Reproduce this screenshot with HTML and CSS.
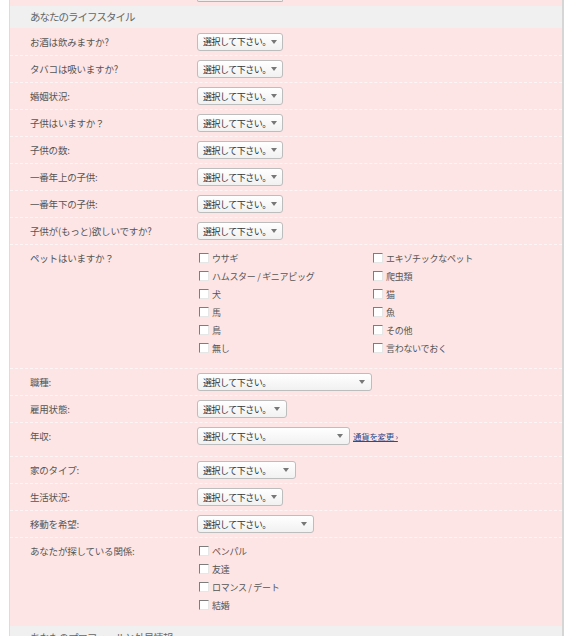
FILE: index.html
```html
<!DOCTYPE html>
<html lang="ja">
<head>
<meta charset="utf-8">
<title>あなたのライフスタイル</title>
<link rel="stylesheet" href="styles.css">
</head>
<body>
<div class="panel">
  <div class="prev"><div class="prev-select"></div></div>
  <div class="section-head">あなたのライフスタイル</div>

  <div class="row"><div class="label">お酒は飲みますか?</div><div class="select w86"><span>選択して下さい。</span><i></i></div></div>
  <div class="row"><div class="label">タバコは吸いますか?</div><div class="select w86"><span>選択して下さい。</span><i></i></div></div>
  <div class="row"><div class="label">婚姻状況:</div><div class="select w86"><span>選択して下さい。</span><i></i></div></div>
  <div class="row"><div class="label">子供はいますか？</div><div class="select w86"><span>選択して下さい。</span><i></i></div></div>
  <div class="row"><div class="label">子供の数:</div><div class="select w86"><span>選択して下さい。</span><i></i></div></div>
  <div class="row"><div class="label">一番年上の子供:</div><div class="select w86"><span>選択して下さい。</span><i></i></div></div>
  <div class="row"><div class="label">一番年下の子供:</div><div class="select w86"><span>選択して下さい。</span><i></i></div></div>
  <div class="row"><div class="label">子供が(もっと)欲しいですか?</div><div class="select w86"><span>選択して下さい。</span><i></i></div></div>

  <div class="row tall pets">
    <div class="label">ペットはいますか？</div>
    <div class="checks two">
      <label class="cb"><b></b>ウサギ</label>
      <label class="cb"><b></b>エキゾチックなペット</label>
      <label class="cb"><b></b>ハムスター / ギニアピッグ</label>
      <label class="cb"><b></b>爬虫類</label>
      <label class="cb"><b></b>犬</label>
      <label class="cb"><b></b>猫</label>
      <label class="cb"><b></b>馬</label>
      <label class="cb"><b></b>魚</label>
      <label class="cb"><b></b>鳥</label>
      <label class="cb"><b></b>その他</label>
      <label class="cb"><b></b>無し</label>
      <label class="cb"><b></b>言わないでおく</label>
    </div>
  </div>

  <div class="row"><div class="label">職種:</div><div class="select w175"><span>選択して下さい。</span><i></i></div></div>
  <div class="row"><div class="label">雇用状態:</div><div class="select w90"><span>選択して下さい。</span><i></i></div></div>
  <div class="row income"><div class="label">年収:</div><div class="field"><div class="select w153"><span>選択して下さい。</span><i></i></div><a class="link" href="#">通貨を変更 ›</a></div></div>
  <div class="row"><div class="label">家のタイプ:</div><div class="select w99"><span>選択して下さい。</span><i></i></div></div>
  <div class="row"><div class="label">生活状況:</div><div class="select w86"><span>選択して下さい。</span><i></i></div></div>
  <div class="row"><div class="label">移動を希望:</div><div class="select w117"><span>選択して下さい。</span><i></i></div></div>

  <div class="row tall rel">
    <div class="label">あなたが探している関係:</div>
    <div class="checks">
      <label class="cb"><b></b>ペンパル</label>
      <label class="cb"><b></b>友達</label>
      <label class="cb"><b></b>ロマンス / デート</label>
      <label class="cb"><b></b>結婚</label>
    </div>
  </div>

  <div class="section-head last">あなたのプロフィールと外見情報</div>
</div>
</body>
</html>
```

FILE: styles.css
```css
html, body {
  margin: 0;
  padding: 0;
  background: #ffffff;
  overflow: hidden;
}
body {
  font-family: "Noto Sans CJK JP", "Liberation Sans", sans-serif;
  color: #555;
}
.panel {
  margin-left: 9px;
  width: 552px;
  border-left: 1px solid #dcdcdc;
  border-right: 2px solid #d6d6d6;
  background: #fde5e5;
}
.prev {
  height: 6px;
  padding-left: 187px;
}
.prev-select {
  width: 84px;
  height: 1px;
  border: 1px solid #b9b3b3;
  border-top: none;
  border-radius: 0 0 3px 3px;
  background: #f2eeee;
}
.section-head {
  height: 22px;
  line-height: 21px;
  background: #f0f0f0;
  padding-left: 20px;
  font-size: 10.5px;
  letter-spacing: -1px;
  color: #666;
}
.section-head.last {
  height: 16px;
  line-height: 24px;
  overflow: hidden;
}
.row {
  display: grid;
  grid-template-columns: 167px auto;
  align-items: center;
  justify-items: start;
  height: 26px;
  padding-left: 20px;
  border-top: 1px dashed rgba(255, 255, 255, 0.6);
}
.section-head + .row {
  border-top: none;
  height: 27px;
}
.label {
  font-size: 9.5px;
  letter-spacing: -0.2px;
  color: #555;
  white-space: nowrap;
}
.select {
  box-sizing: border-box;
  height: 18px;
  border: 1px solid #bdbdbd;
  border-radius: 3px;
  background: linear-gradient(#ffffff, #f1f1f1);
  display: flex;
  align-items: center;
  justify-content: space-between;
  padding: 0 6px 0 5px;
}
.select span {
  font-size: 9px;
  letter-spacing: -0.5px;
  color: #333;
  white-space: nowrap;
}
.select i {
  width: 0;
  height: 0;
  border-left: 3px solid transparent;
  border-right: 3px solid transparent;
  border-top: 4px solid #777;
}
.w86 { width: 86px; }
.w90 { width: 90px; }
.w99 { width: 99px; }
.w117 { width: 117px; }
.w153 { width: 153px; }
.w175 { width: 175px; }
.field {
  display: flex;
  align-items: center;
  gap: 3px;
}
.link {
  font-size: 8.5px;
  color: #2b4c8c;
  text-decoration: underline;
  letter-spacing: -0.3px;
}
.income {
  height: auto;
  align-items: start;
  padding-top: 4px;
  padding-bottom: 11px;
}
.income .label {
  line-height: 18px;
}
.tall {
  height: auto;
  align-items: start;
  padding-top: 4px;
  padding-bottom: 12px;
}
.pets { padding-bottom: 11px; }
.tall .label {
  line-height: 18px;
}
.checks {
  display: grid;
  grid-template-columns: auto;
  grid-auto-rows: 18px;
}
.checks.two {
  grid-template-columns: 174px auto;
}
.cb {
  display: flex;
  align-items: center;
  font-size: 9px;
  letter-spacing: -0.3px;
  color: #555;
  white-space: nowrap;
  padding-left: 2px;
}
.cb b {
  box-sizing: border-box;
  width: 10px;
  height: 10px;
  margin-right: 3px;
  background: #fff;
  border-top: 1px solid #7d7d7d;
  border-left: 1px solid #7d7d7d;
  border-right: 1px solid #e6e6e6;
  border-bottom: 1px solid #e6e6e6;
}
```
